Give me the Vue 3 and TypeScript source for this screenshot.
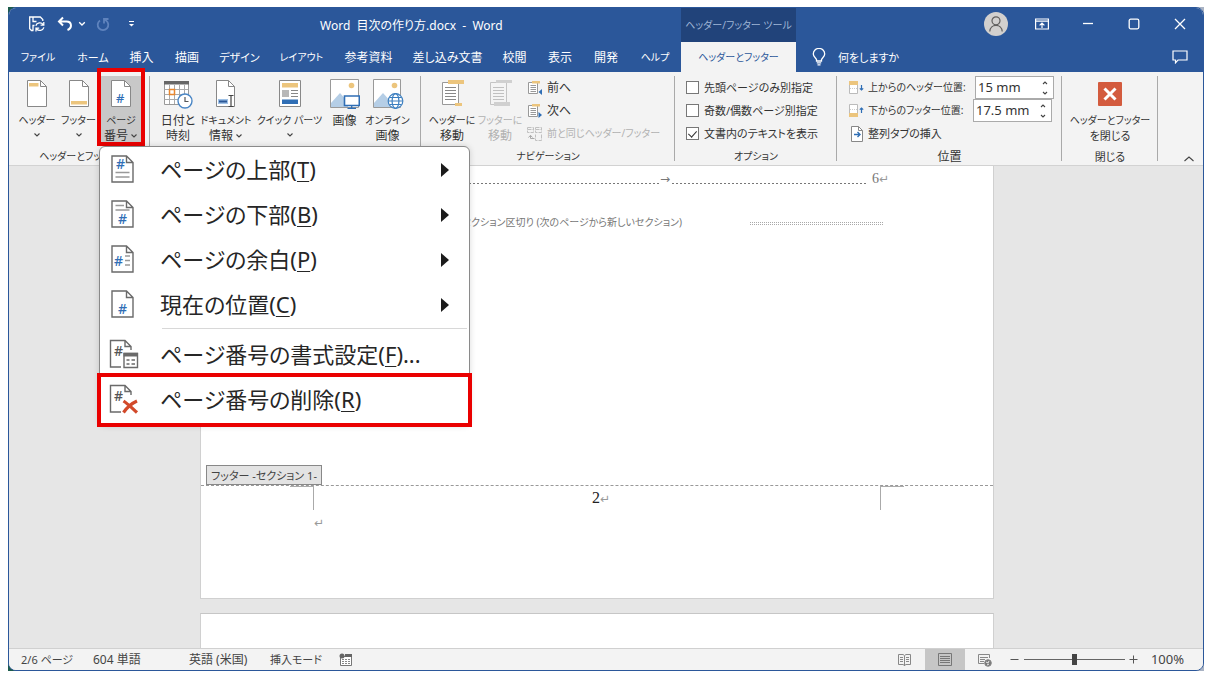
<script setup lang="ts">
import { ref } from 'vue'

interface MenuEntry {
  id: string
  label: string
  key: string
  tail: string
  submenu: boolean
}

const tabs: string[] = [
  'ファイル', 'ホーム', '挿入', '描画', 'デザイン', 'レイアウト',
  '参考資料', '差し込み文書', '校閲', '表示', '開発', 'ヘルプ',
]

const placeEntries: MenuEntry[] = [
  { id: 'top', label: 'ページの上部', key: 'T', tail: ')', submenu: true },
  { id: 'bottom', label: 'ページの下部', key: 'B', tail: ')', submenu: true },
  { id: 'margin', label: 'ページの余白', key: 'P', tail: ')', submenu: true },
  { id: 'current', label: '現在の位置', key: 'C', tail: ')', submenu: true },
]

const editEntries: MenuEntry[] = [
  { id: 'format', label: 'ページ番号の書式設定', key: 'F', tail: ')...', submenu: false },
  { id: 'remove', label: 'ページ番号の削除', key: 'R', tail: ')', submenu: false },
]

const firstPage = ref(false)
const oddEven = ref(false)
const showText = ref(true)
const headerPos = ref('15 mm')
const footerPos = ref('17.5 mm')
const zoom = ref(100)
</script>

<template>
  <div class="desktop">
    <div class="window">
      <header class="titlebar">
        <div class="title-left">
          <div class="quick">
            <button class="q-save" aria-label="上書き保存">
              <svg width="18" height="18" viewBox="0 0 18 18" fill="none" stroke="#fff" stroke-width="1.3">
                <path d="M5.5 15.5H3.5L1.7 13.7V2H12.3L14.8 4.5V6M5 2V6.5H8.5M5 15.5V10.5H6.5" />
                <path d="M7.8 10.8A4.2 4.2 0 0 1 15.2 9.6M15.8 7V10.2H12.6M15.9 12.4A4.2 4.2 0 0 1 8.6 13.8M8 16.6V13.2H11.2" />
              </svg>
            </button>
            <button class="q-undo" aria-label="元に戻す">
              <svg width="16" height="16" viewBox="0 0 16 16" fill="none" stroke="#fff" stroke-width="2">
                <path d="M6 1.5L2 5.5L6 9.5M2.5 5.5H9.5C15 5.5 15.5 12 10.5 14" />
              </svg>
            </button>
            <button class="q-more" aria-label="元に戻す一覧">
              <svg width="8" height="6" viewBox="0 0 8 6" fill="none" stroke="#fff" stroke-width="1.3"><path d="M1.2 1.2L4 4L6.8 1.2" /></svg>
            </button>
            <button class="q-redo" aria-label="繰り返し">
              <svg width="14" height="15" viewBox="0 0 14 15" fill="none" stroke="#5f83bd" stroke-width="1.8">
                <path d="M4 3.4A5.3 5.3 0 1 0 10 3.4L8.5 2.5M8 6.5V2H12.5" />
              </svg>
            </button>
            <button class="q-custom" aria-label="クイック アクセスのカスタマイズ">
              <svg width="7" height="8" viewBox="0 0 7 8"><path d="M1 1.5H6" stroke="#fff" /><path d="M1 4H6L3.5 6.5Z" fill="#fff" /></svg>
            </button>
          </div>
          <span class="title">Word&nbsp; 目次の作り方.docx&nbsp; -&nbsp; Word</span>
        </div>
        <div class="context-title">ヘッダー/フッター ツール</div>
        <div class="title-right">
          <button class="avatar" aria-label="アカウント">
            <svg width="24" height="24" viewBox="0 0 24 24">
              <circle cx="12" cy="12" r="12" fill="#d2d0ce" />
              <g fill="none" stroke="#605e5c" stroke-width="1.2"><circle cx="12" cy="8.8" r="4" /><path d="M5.8 19.5C6 11.3 18 11.3 18.2 19.5" /></g>
            </svg>
          </button>
          <button class="caption" aria-label="リボンの表示オプション">
            <svg width="14" height="12" viewBox="0 0 14 12" fill="none" stroke="#fff" stroke-width="1.2"><path d="M.6 1H13.4V11H.6ZM.6 3.2H13.4M7 10V5.2M4.6 7.4L7 5L9.4 7.4" /></svg>
          </button>
          <button class="caption" aria-label="最小化">
            <svg width="12" height="12" viewBox="0 0 12 12"><path d="M1 5.5H11" stroke="#fff" stroke-width="1.3" /></svg>
          </button>
          <button class="caption" aria-label="最大化">
            <svg width="12" height="12" viewBox="0 0 12 12"><rect x="1.2" y="1.2" width="9.6" height="9.6" rx="1.5" fill="none" stroke="#fff" stroke-width="1.3" /></svg>
          </button>
          <button class="caption" aria-label="閉じる">
            <svg width="12" height="12" viewBox="0 0 12 12"><path d="M1 1L11 11M11 1L1 11" stroke="#fff" stroke-width="1.3" /></svg>
          </button>
        </div>
      </header>

      <nav class="tabs">
        <button v-for="t in tabs" :key="t" class="tab">{{ t }}</button>
        <button class="tab active">ヘッダーとフッター</button>
        <div class="tabs-right">
          <button class="tell">
            <svg width="14" height="18" viewBox="0 0 14 18" fill="none" stroke="#fff" stroke-width="1.3">
              <path d="M4.5 13V11.5C4 9.8 1.3 8.8 1.3 5.9A5.5 5.3 0 0 1 12.7 5.9C12.7 8.8 10 9.8 9.5 11.5V13ZM4.8 14.8H9.2M5.5 16.8H8.5" />
            </svg>
            何をしますか
          </button>
          <button class="comment" aria-label="コメント">
            <svg width="16" height="14" viewBox="0 0 16 14" fill="none" stroke="#fff" stroke-width="1.2"><path d="M1 1H15V10H6L3.5 12.8V10H1Z" /></svg>
          </button>
        </div>
      </nav>

      <section class="ribbon">
        <div class="group g-hf">
          <div class="tools">
            <button class="big kana">
              <svg width="22" height="30" viewBox="0 0 22 30"><path d="M1.5 1.5H14.5L20.5 7.5V27.5H1.5Z" fill="#fff" stroke="#888" /><path d="M14.5 1.5V7.5H20.5" fill="none" stroke="#888" /><path d="M3 4H12.5V7.5H3Z" fill="#ecc57d" /></svg>
              <span>ヘッダー</span>
              <svg class="chev" width="8" height="6" viewBox="0 0 8 6"><path d="M1.5 1.5L4 4L6.5 1.5" /></svg>
            </button>
            <button class="big kana">
              <svg width="22" height="30" viewBox="0 0 22 30"><path d="M1.5 1.5H14.5L20.5 7.5V27.5H1.5Z" fill="#fff" stroke="#888" /><path d="M14.5 1.5V7.5H20.5" fill="none" stroke="#888" /><path d="M3 22H19V25.5H3Z" fill="#ecc57d" /></svg>
              <span>フッター</span>
              <svg class="chev" width="8" height="6" viewBox="0 0 8 6"><path d="M1.5 1.5L4 4L6.5 1.5" /></svg>
            </button>
            <div class="dropdown">
              <button class="big pressed" aria-haspopup="menu" aria-expanded="true">
                <svg width="22" height="30" viewBox="0 0 22 30"><path d="M1.5 1.5H14.5L20.5 7.5V27.5H1.5Z" fill="#fff" stroke="#888" /><path d="M14.5 1.5V7.5H20.5" fill="none" stroke="#888" /><text class="hash" x="6" y="24" font-size="13">#</text></svg>
                <span class="kana">ページ</span>
                <span class="with-chev">番号<svg class="chev" width="8" height="6" viewBox="0 0 8 6"><path d="M1.5 1.5L4 4L6.5 1.5" /></svg></span>
              </button>
              <div class="menu" role="menu">
                <button v-for="e in placeEntries" :key="e.id" class="entry" role="menuitem">
                  <svg width="30" height="30" viewBox="0 0 30 30" fill="none" stroke="#6a6a6a" stroke-width="1.4">
                    <path d="M3 2H17.5L24 8.5V28H3ZM17.5 2V8.5H24" />
                    <template v-if="e.id === 'top'"><text class="hash" x="7" y="15" font-size="14">#</text><path d="M6.5 18.5H20.5M6.5 23H20.5" stroke="#999" /></template>
                    <template v-else-if="e.id === 'bottom'"><path d="M6.5 6.5H15M6.5 11H20.5" stroke="#999" /><text class="hash" x="9" y="25" font-size="14">#</text></template>
                    <template v-else-if="e.id === 'margin'"><text class="hash" x="5" y="22" font-size="14">#</text><path d="M16 12H21M16 16.5H21M16 21H21" stroke="#999" /></template>
                    <text v-else class="hash" x="9" y="25" font-size="14">#</text>
                  </svg>
                  <span>{{ e.label }}(<u>{{ e.key }}</u>{{ e.tail }}</span>
                  <svg class="arrow" width="10" height="16" viewBox="0 0 10 16"><path d="M1 1L9 8L1 15Z" fill="#1b1b1b" /></svg>
                </button>
                <hr class="rule" />
                <button v-for="e in editEntries" :key="e.id" class="entry" :class="{ marked: e.id === 'remove' }" role="menuitem">
                  <svg width="30" height="30" viewBox="0 0 30 30" fill="none" stroke="#6a6a6a" stroke-width="1.4">
                    <path d="M12 28H1.5V1.5H16L22 7.5V11M16 1.5V7.5H22" />
                    <text class="hash gray" x="5" y="17" font-size="14">#</text>
                    <template v-if="e.id === 'format'">
                      <path d="M15 14.5H28.5V28.5H15Z" fill="#fff" /><path d="M14.5 13.8H29V17.5H14.5Z" fill="#6a6a6a" stroke="none" />
                      <path d="M17.5 21H20.5M22.5 21H26M17.5 25H20.5M22.5 25H26" stroke-width="1.6" />
                    </template>
                    <path v-else d="M14.5 17C19 20 23 24 28 28.5M28 17C23.5 19 18 23.5 14.5 28.5" stroke="#d2492a" stroke-width="3.2" />
                  </svg>
                  <span>{{ e.label }}(<u>{{ e.key }}</u>{{ e.tail }}</span>
                </button>
              </div>
            </div>
          </div>
          <div class="caption-row kana">ヘッダーとフッター</div>
        </div>

        <div class="group g-insert">
          <div class="tools">
            <button class="big">
              <svg width="30" height="30" viewBox="0 0 30 30">
                <path d="M1.5 2.5H25.5V25.5H1.5Z" fill="#fff" stroke="#999" /><path d="M1 2H26V5.5H1Z" fill="#666" />
                <path d="M1.5 10.5H25M1.5 15.5H25M1.5 20.5H25M6.5 6V25M11.5 6V25M16.5 6V25M21.5 6V25" stroke="#aaa" />
                <path d="M6.5 10.5H11.5V15.5H6.5Z" fill="#fff" stroke="#e8862e" stroke-width="1.5" />
                <circle cx="22" cy="22" r="7" fill="#fff" stroke="#4a86c5" stroke-width="1.4" /><path d="M22 18V22.5H25.5" fill="none" stroke="#555" stroke-width="1.2" />
              </svg>
              <span>日付と</span><span>時刻</span>
            </button>
            <button class="big">
              <svg width="22" height="30" viewBox="0 0 22 30">
                <path d="M1.5 1.5H13.5L19.5 7.5V27.5H1.5Z" fill="#fff" stroke="#888" /><path d="M13.5 1.5V7.5H19.5" fill="none" stroke="#888" />
                <path d="M3 20H13V25H3Z" fill="#9fc1e6" /><path d="M4 22.5H12" stroke="#2b5797" stroke-width="2" /><path d="M13.5 16.5H18.5M16 16.5V27.5M13.5 27.5H18.5" stroke="#444" stroke-width="1.2" />
              </svg>
              <span class="kana">ドキュメント</span>
              <span class="with-chev">情報<svg class="chev" width="8" height="6" viewBox="0 0 8 6"><path d="M1.5 1.5L4 4L6.5 1.5" /></svg></span>
            </button>
            <button class="big kana">
              <svg width="24" height="30" viewBox="0 0 24 30">
                <path d="M1.5 1.5H22.5V27.5H1.5Z" fill="#fff" stroke="#888" /><path d="M4 4H20V8.5H4Z" fill="#ecc57d" /><path d="M4 11H11V18H4Z" fill="#b8b8b8" />
                <path d="M13 11.5H20M13 14.5H20M13 17.5H20" stroke="#888" /><path d="M4 20.5H20V25H4Z" fill="#2f6eb5" />
              </svg>
              <span>クイック パーツ</span>
              <svg class="chev" width="8" height="6" viewBox="0 0 8 6"><path d="M1.5 1.5L4 4L6.5 1.5" /></svg>
            </button>
            <button class="big">
              <svg width="31" height="30" viewBox="0 0 31 30">
                <path d="M1.5 .5H29.5V28.5H1.5Z" fill="#fff" stroke="#999" /><circle cx="22.5" cy="6.5" r="2.8" fill="#ecc57d" /><path d="M2 28V24L11 14L19 23V28Z" fill="#b5cee6" />
                <path d="M15.5 17H30.3V26.5H15.5Z" fill="#fff" stroke="#2f6eb5" stroke-width="1.6" /><path d="M22.7 27V29.3M18.5 29.3H27" stroke="#2f6eb5" stroke-width="1.3" />
              </svg>
              <span>画像</span>
            </button>
            <button class="big">
              <svg width="32" height="30" viewBox="0 0 32 30">
                <path d="M1.5 .5H28.5V28.5H1.5Z" fill="#fff" stroke="#999" /><circle cx="22.5" cy="6.5" r="2.8" fill="#ecc57d" /><path d="M2 28V24L11 14L19 23V28Z" fill="#b5cee6" />
                <g fill="#fff" stroke="#3c7fc0" stroke-width="1.2"><circle cx="23.5" cy="22" r="7.3" /><ellipse cx="23.5" cy="22" rx="3.4" ry="7.3" fill="none" /><path d="M16.5 22H30.5M17.5 18.5H29.5M17.5 25.5H29.5" /></g>
              </svg>
              <span class="kana">オンライン</span><span>画像</span>
            </button>
          </div>
        </div>

        <div class="group g-nav">
          <div class="tools">
            <button class="big">
              <svg width="24" height="30" viewBox="0 0 24 30"><path d="M2.5 3.5H18.5V25.5H2.5Z" fill="#fff" stroke="#999" /><path d="M8 1H24V5H8Z" fill="#ecc57d" /><path d="M5 8.5H16M5 11.5H16M5 14.5H16M5 17.5H16M5 20.5H16" stroke="#888" /><path d="M15 24H22V27H15Z" fill="#ecc57d" /></svg>
              <span class="kana">ヘッダーに</span><span>移動</span>
            </button>
            <button class="big" disabled>
              <svg width="24" height="30" viewBox="0 0 24 30"><path d="M2.5 3.5H18.5V25.5H2.5Z" fill="#f4f4f4" stroke="#c4c4c4" /><path d="M8 1H24V4H8Z" fill="#d0d0d0" /><path d="M5 8.5H16M5 11.5H16M5 14.5H16M5 17.5H16M5 20.5H16" stroke="#c0c0c0" /><path d="M6 23H22V27H6Z" fill="#d0d0d0" /></svg>
              <span class="kana">フッターに</span><span>移動</span>
            </button>
            <div class="rows">
              <button class="row">
                <svg width="16" height="16" viewBox="0 0 16 16"><path d="M1.5 2.5H10.5V13.5H1.5Z" fill="#fff" stroke="#999" /><path d="M5 1H13V3.5H5Z" fill="#ecc57d" /><path d="M3.5 5.5H9M3.5 7.5H9M3.5 9.5H9M3.5 11.5H9" stroke="#999" /><path d="M15 9V15L11.5 12Z" fill="#2f6eb5" /></svg>
                前へ
              </button>
              <button class="row">
                <svg width="16" height="16" viewBox="0 0 16 16"><path d="M1.5 2.5H10.5V13.5H1.5Z" fill="#fff" stroke="#999" /><path d="M5 1H13V3.5H5Z" fill="#ecc57d" /><path d="M3.5 5.5H9M3.5 7.5H9M3.5 9.5H9M3.5 11.5H9" stroke="#999" /><path d="M11.5 9V15L15 12Z" fill="#2f6eb5" /></svg>
                次へ
              </button>
              <button class="row" disabled>
                <svg width="16" height="16" viewBox="0 0 16 16" fill="none" stroke="#c0c0c0"><path d="M.5 1.5H6.5V6.5H.5ZM8.5 1.5H14.5V6.5H8.5ZM14.5 8.5V14.5H8.5V8.5M.5 3.5H6.5M8.5 3.5H14.5" stroke-dasharray="4 1" /><path d="M7.5 12.5H3.5V9.5M1.5 11.5L3.5 9.3L5.5 11.5" stroke="#aaa" /></svg>
                <span class="kana">前と同じヘッダー/フッター</span>
              </button>
            </div>
          </div>
          <div class="caption-row kana">ナビゲーション</div>
        </div>

        <div class="group g-option">
          <div class="tools">
            <div class="rows">
              <label class="row"><input v-model="firstPage" type="checkbox" />先頭ページのみ別指定</label>
              <label class="row"><input v-model="oddEven" type="checkbox" />奇数/偶数ページ別指定</label>
              <label class="row"><input v-model="showText" type="checkbox" />文書内のテキストを表示</label>
            </div>
          </div>
          <div class="caption-row kana">オプション</div>
        </div>

        <div class="group g-pos">
          <div class="tools">
            <div class="rows">
              <div class="row">
                <svg width="15" height="16" viewBox="0 0 15 16"><path d="M.5 1.5H8.5V13.5H.5Z" fill="#fff" stroke="#bbb" /><path d="M1 8.5H8" stroke="#ccc" stroke-dasharray="1 1" /><path d="M0 1H9V5H0Z" fill="#ecc57d" /><path d="M12.5 5V10M10.8 8.3L12.5 10L14.2 8.3" fill="none" stroke="#2f6eb5" stroke-width="1.2" /></svg>
                <label class="pos-label" for="header-pos">上からのヘッダー位置:</label>
                <span class="spin"><input id="header-pos" v-model="headerPos" type="text" />
                  <span class="spinners">
                    <button aria-label="ヘッダー位置を増やす"><svg class="chev" width="8" height="6" viewBox="0 0 8 6"><path d="M2 4L4 2L6 4" /></svg></button>
                    <button aria-label="ヘッダー位置を減らす"><svg class="chev" width="8" height="6" viewBox="0 0 8 6"><path d="M2 2L4 4L6 2" /></svg></button>
                  </span>
                </span>
              </div>
              <div class="row">
                <svg width="15" height="16" viewBox="0 0 15 16"><path d="M.5 1.5H8.5V13.5H.5Z" fill="#fff" stroke="#bbb" /><path d="M1 6.5H8" stroke="#ccc" stroke-dasharray="1 1" /><path d="M0 10H9V14H0Z" fill="#ecc57d" /><path d="M12.5 10V5M10.8 6.7L12.5 5L14.2 6.7" fill="none" stroke="#2f6eb5" stroke-width="1.2" /></svg>
                <label class="pos-label low" for="footer-pos">下からのフッター位置:</label>
                <span class="spin"><input id="footer-pos" v-model="footerPos" type="text" />
                  <span class="spinners">
                    <button aria-label="フッター位置を増やす"><svg class="chev" width="8" height="6" viewBox="0 0 8 6"><path d="M2 4L4 2L6 4" /></svg></button>
                    <button aria-label="フッター位置を減らす"><svg class="chev" width="8" height="6" viewBox="0 0 8 6"><path d="M2 2L4 4L6 2" /></svg></button>
                  </span>
                </span>
              </div>
              <button class="row">
                <svg width="15" height="16" viewBox="0 0 15 16"><path d="M2.5 .5H9.5L13.5 4.5V15.5H2.5Z" fill="#fff" stroke="#888" /><path d="M9.5 .5V4.5H13.5" fill="none" stroke="#888" /><path d="M5 8.5H11M8.5 6L11 8.5L8.5 11" fill="none" stroke="#2f6eb5" stroke-width="1.4" /></svg>
                整列タブの挿入
              </button>
            </div>
          </div>
          <div class="caption-row">位置</div>
        </div>

        <div class="group g-close">
          <div class="tools">
            <button class="big">
              <svg width="24" height="30" viewBox="0 0 24 30"><rect y="3" width="24" height="24" rx="1" fill="#d35b3e" /><path d="M6.5 9.5L17.5 20.5M17.5 9.5L6.5 20.5" stroke="#fff" stroke-width="3" /></svg>
              <span class="kana">ヘッダーとフッター</span><span class="mixed">を閉じる</span>
            </button>
          </div>
          <div class="caption-row mixed">閉じる</div>
        </div>

        <div class="collapse">
          <button aria-label="リボンを折りたたむ"><svg class="chev" width="12" height="8" viewBox="0 0 12 8"><path d="M1.5 6L6 2L10.5 6" /></svg></button>
        </div>
      </section>

      <main class="canvas">
        <article class="page">
          <div class="page-body">
            <p class="toc"><span class="dots"></span><span class="tab-mark">→</span><span class="dots"></span><span class="num">6<i>↵</i></span></p>
            <p class="break"><span>セクション区切り (次のページから新しいセクション)</span><span class="double"></span></p>
          </div>
          <div class="footer-tag"><span>フッター -セクション 1-</span></div>
          <div class="page-footer">
            <span class="crop crop-left"></span>
            <div class="footer-text">
              <p class="footer-num">2<i>↵</i></p>
              <p><i>↵</i></p>
            </div>
            <span class="crop crop-right"></span>
          </div>
        </article>
        <article class="page next"></article>
      </main>

      <footer class="status">
        <button class="s-page">2/6 ページ</button>
        <button class="s-words">604 単語</button>
        <button class="s-lang">英語 (米国)</button>
        <button class="s-mode">挿入モード</button>
        <button aria-label="マクロの記録">
          <svg width="13" height="13" viewBox="0 0 13 13"><path d="M1.5 3.5H12.5V12.5H1.5Z" fill="#fff" stroke="#777" /><path d="M6 1H13V4H6Z" fill="#666" /><circle cx="3" cy="3" r="2.5" fill="#666" /><path d="M3 6.5H11M3 8.5H11M3 10.5H11" stroke="#888" stroke-dasharray="2 1" /></svg>
        </button>
        <div class="views">
          <button aria-label="閲覧モード">
            <svg width="15" height="14" viewBox="0 0 15 14" fill="none" stroke="#888"><path d="M1.5 1.5H6L7.5 2.5L9 1.5H13.5V11.5H9L7.5 12.5L6 11.5H1.5ZM7.5 3V13M3 4.5H6M3 6.5H6M3 8.5H6M9 4.5H12M9 6.5H12M9 8.5H12" /></svg>
          </button>
          <button class="on" aria-label="印刷レイアウト">
            <svg width="14" height="14" viewBox="0 0 14 14" fill="none" stroke="#777"><path d="M.5 .5H13.5V12.5H.5ZM2 3.5H12M2 5.5H12M2 7.5H12M2 9.5H12" /></svg>
          </button>
          <button aria-label="Web レイアウト">
            <svg width="15" height="14" viewBox="0 0 15 14" fill="none" stroke="#888"><path d="M7 10.5H1.5V1.5H12.5V5M3 4.5H11M3 6.5H8M3 8.5H7" /><circle cx="11" cy="10" r="3.3" fill="#777" /><path d="M9 9L11 10L12 8M10 12L12 11" stroke="#eee" /></svg>
          </button>
        </div>
        <button class="zoom-btn" aria-label="縮小"><svg width="9" height="9" viewBox="0 0 9 9"><path d="M.5 4.5H8.5" stroke="#555" /></svg></button>
        <input v-model="zoom" class="slider" type="range" min="0" max="200" aria-label="ズーム" />
        <button class="zoom-btn" aria-label="拡大"><svg width="9" height="9" viewBox="0 0 9 9"><path d="M.5 4.5H8.5M4.5 .5V8.5" stroke="#555" /></svg></button>
        <button class="percent">{{ zoom }}%</button>
      </footer>
    </div>
  </div>
</template>

<style>
html,
body {
  background: #fff;
}
</style>

<style scoped>
* {
  box-sizing: border-box;
}
button {
  padding: 0;
  border: 0;
  background: none;
  color: inherit;
  font: inherit;
  white-space: nowrap;
}
p {
  margin: 0;
}
i {
  font-family: "DejaVu Sans", sans-serif;
  font-style: normal;
  font-size: 12px;
  color: #999;
}
.desktop {
  height: 100vh;
  padding: 7px 6px 7px 8px;
  font-family: "Noto Sans", "Noto Sans CJK JP", sans-serif;
  font-feature-settings: "palt";
  font-size: 12px;
  line-height: 15px;
  color: #333;
  background: linear-gradient(90deg, #1d5c4c, #a9b3c4) content-box, #fff;
}
.window {
  height: 100%;
  display: flex;
  flex-direction: column;
  border: 1px solid #2b579a;
  border-radius: 8px;
  background: #e6e6e6;
}
.kana {
  font-size: 10px;
}
.mixed {
  font-size: 11px;
}

.titlebar {
  display: grid;
  grid-template-columns: 672px 115px 1fr;
  height: 34px;
  flex: none;
  color: #fff;
  background: #2b579a;
  border-radius: 7px 7px 0 0;
}
.title-left {
  display: flex;
  align-items: center;
}
.quick {
  display: flex;
  align-items: center;
  width: 311px;
  padding: 0 0 2px 19px;
}
.quick button {
  display: flex;
}
.q-undo {
  margin-left: 11px;
}
.q-more {
  margin-left: 5px;
}
.q-redo {
  margin-left: 10px;
}
.q-custom {
  margin-left: 18px;
}
.title {
  white-space: pre;
}
.context-title {
  display: flex;
  align-items: center;
  justify-content: center;
  font-size: 10px;
  white-space: nowrap;
  color: #9fb5d6;
  background: #21437a;
}
.title-right {
  display: flex;
  justify-content: flex-end;
  align-items: center;
  padding-bottom: 2px;
}
.avatar {
  display: flex;
  margin-right: 11px;
}
.caption {
  display: flex;
  width: 46px;
  height: 32px;
  align-items: center;
  justify-content: center;
}

.tabs {
  display: grid;
  grid-template-columns: 58px 52px 45px 46px 59px 65px 69px 89px 45px 46px 46px 52px 115px 1fr;
  height: 30px;
  flex: none;
  color: #fff;
  background: #2b579a;
}
.tab.active {
  font-size: 10px;
  color: #2b579a;
  background: #f3f3f3;
}
.tab:nth-child(2),
.tab:nth-child(5) {
  font-size: 11px;
}
.tab:nth-child(1),
.tab:nth-child(6),
.tab:nth-child(12) {
  font-size: 10px;
}
.tabs-right {
  display: flex;
  align-items: center;
  justify-content: space-between;
  padding: 0 15px 0 16px;
}
.tell {
  display: flex;
  align-items: center;
  gap: 12px;
  font-size: 11px;
}
.comment {
  display: flex;
}

.ribbon {
  display: flex;
  flex: none;
  height: 94px;
  background: #f3f3f3;
  border-bottom: 1px solid #d2d2d2;
}
.group {
  position: relative;
  display: flex;
  flex: none;
  flex-direction: column;
  padding-top: 4px;
}
.group::after {
  content: "";
  position: absolute;
  right: 0;
  top: 4px;
  bottom: 4px;
  width: 1px;
  background: #a9a9a9;
}
.tools {
  display: grid;
  height: 70px;
}
.caption-row {
  padding-top: 2px;
  line-height: 17px;
  text-align: center;
  white-space: nowrap;
}
.g-hf {
  width: 141px;
}
.g-hf .tools {
  grid-template-columns: 42px 41px 44px;
  padding-left: 7px;
}
.g-insert {
  width: 271px;
}
.g-insert .tools {
  grid-template-columns: 40px 56px 71px 39px 47px;
  padding-left: 8px;
}
.g-nav {
  width: 254px;
}
.g-nav .tools {
  grid-template-columns: 48px 48px 1fr;
  padding-left: 7px;
}
.g-nav .rows {
  padding-left: 3px;
}
.g-option {
  width: 162px;
}
.g-option .tools {
  padding-left: 11px;
  font-size: 11px;
}
.g-pos {
  width: 225px;
}
.g-pos .tools {
  padding-left: 12px;
  font-size: 11px;
}
.g-close {
  width: 96px;
}
.big {
  display: flex;
  flex-direction: column;
  align-items: center;
  padding-top: 3px;
  min-width: 0;
}
.big > svg:first-child {
  margin-bottom: 4px;
}
.big > svg.chev {
  margin-top: 4px;
}
button:disabled {
  color: #b1b1b1;
}
.chev path {
  fill: none;
  stroke: #444;
  stroke-width: 1.1;
}
.with-chev {
  display: flex;
  align-items: center;
  gap: 2px;
}
.hash {
  font-family: "Noto Sans", sans-serif;
  font-weight: 500;
  fill: #2f6eb5;
  stroke: none;
}
.hash.gray {
  fill: #555;
}
.rows {
  display: flex;
  flex-direction: column;
}
.row {
  display: flex;
  align-items: center;
  gap: 4px;
  height: 23px;
  white-space: nowrap;
}
.pos-label {
  width: 103px;
  font-size: 10px;
}
.pos-label.low {
  width: 101px;
}
input[type="checkbox"] {
  appearance: none;
  display: flex;
  align-items: center;
  justify-content: center;
  width: 13px;
  height: 13px;
  margin: 0 1px 0 0;
  border: 1px solid #777;
  background: #fff;
}
input[type="checkbox"]:checked::after {
  content: "";
  width: 4px;
  height: 7px;
  margin-bottom: 2px;
  border: solid #333;
  border-width: 0 1px 1px 0;
  rotate: 42deg;
}
.spin {
  display: flex;
  width: 79px;
  height: 23px;
  border: 1px solid #aaa;
  background: #fff;
}
.spin input {
  flex: 1;
  min-width: 0;
  padding: 0 0 0 2px;
  border: 0;
  outline: 0;
  background: none;
  font: inherit;
  font-size: 13px;
  color: #333;
}
.spinners {
  display: flex;
  flex-direction: column;
  justify-content: center;
  gap: 4px;
  width: 16px;
}
.spinners button {
  display: flex;
  justify-content: center;
}
.collapse {
  flex: 1;
  display: flex;
  align-items: flex-end;
  justify-content: flex-end;
  padding: 0 8px 2px 0;
}
.collapse button {
  display: flex;
}

.dropdown {
  position: relative;
  z-index: 5;
}
.pressed {
  width: 100%;
  height: 100%;
  background: #c8c8c8;
}
.pressed::after {
  content: "";
  position: absolute;
  inset: -8px -2px 0;
  border: 4px solid #ea0000;
}
.menu {
  position: absolute;
  top: 100%;
  left: 0;
  width: 371px;
  padding: 1px 0 2px;
  border: 1px solid #8a8a8a;
  border-radius: 6px;
  background: #fff;
  box-shadow: 0 0 6px rgba(0, 0, 0, 0.15);
}
.entry {
  position: relative;
  display: flex;
  align-items: center;
  width: 100%;
  height: 45px;
  padding: 0 19px 0 9px;
  font-size: 22px;
  line-height: 30px;
  text-align: left;
  color: #262626;
}
.entry > span {
  flex: 1;
  margin: 0 0 3px 21px;
}
.entry u {
  text-decoration-thickness: 1px;
  text-underline-offset: 3px;
}
.entry > svg:first-child {
  margin-bottom: 4px;
}
.entry > .arrow {
  margin-bottom: 2px;
}
.rule {
  height: 1px;
  margin: 0 2px 4px 62px;
  border: 0;
  background: #d8d8d8;
}
.marked::after {
  content: "";
  position: absolute;
  inset: -5px -3px -4px;
  border: 4px solid #ea0000;
}

.canvas {
  flex: 1;
  min-height: 0;
  overflow: hidden;
  padding-right: 18px;
}
.page {
  display: flex;
  flex-direction: column;
  width: 794px;
  max-width: 100%;
  margin: 0 auto;
  border: 1px solid #d0d0d0;
  border-top: 0;
  background: #fff;
}
.page.next {
  height: 100px;
  margin-top: 14px;
  border-top: 1px solid #c6c6c6;
}
.page-body {
  height: 299px;
  padding: 4px 104px 0 112px;
  color: #777;
}
.toc {
  display: flex;
  align-items: center;
  height: 18px;
  font-family: "Liberation Serif", serif;
  font-size: 14px;
}
.dots {
  flex: 1;
  height: 1px;
  margin-top: 8px;
  background: repeating-linear-gradient(90deg, #777 0 2px, transparent 2px 4px);
}
.dots:first-child {
  flex: 0 0 347px;
}
.tab-mark {
  width: 12px;
  font-family: "DejaVu Sans", sans-serif;
  font-size: 12px;
}
.num {
  margin-left: 4px;
}
.break {
  display: flex;
  justify-content: flex-end;
  align-items: center;
  height: 18px;
  margin-top: 25px;
  padding-right: 6px;
  font-size: 10px;
  white-space: nowrap;
}
.double {
  width: 133px;
  height: 3px;
  margin: 3px 0 0 68px;
  border: dotted #aaa;
  border-width: 1px 0;
}
.footer-tag {
  padding-left: 5px;
}
.footer-tag span {
  display: flex;
  align-items: center;
  justify-content: center;
  width: 116px;
  height: 20px;
  border: 1px solid #888;
  font-size: 11px;
  white-space: nowrap;
  color: #444;
  background: #e3e3e3;
}
.page-footer {
  display: flex;
  justify-content: space-between;
  height: 113px;
  padding: 0 89px;
  border-top: 1px dashed #999;
}
.crop {
  width: 24px;
  height: 24px;
  border-top: 1px solid #aaa;
}
.crop-left {
  border-right: 1px solid #aaa;
}
.crop-right {
  border-left: 1px solid #aaa;
}
.footer-text {
  flex: 1;
  line-height: 24px;
}
.footer-num {
  padding-left: 8px;
  text-align: center;
  font-family: "Liberation Serif", serif;
  font-size: 16px;
  color: #222;
}

.status {
  display: flex;
  align-items: center;
  flex: none;
  height: 22px;
  padding: 0 19px 0 12px;
  border-top: 1px solid #d0d0d0;
  border-radius: 0 0 7px 7px;
  font-size: 11px;
  color: #444;
  background: #f3f3f3;
}
.status svg {
  display: block;
}
.status > button {
  text-align: left;
}
.s-page {
  width: 72px;
}
.status > .s-words {
  width: 96px;
  font-size: 12px;
}
.status > .s-lang {
  width: 81px;
  font-size: 12px;
}
.s-mode {
  width: 69px;
}
.views {
  display: flex;
  align-self: stretch;
  margin-left: auto;
}
.views button {
  display: flex;
  align-items: center;
  justify-content: center;
  width: 40px;
}
.views .on {
  background: #c6c6c6;
}
.views + .zoom-btn {
  margin-left: 5px;
}
.slider {
  appearance: none;
  width: 101px;
  height: 12px;
  margin: 0 4px 0 5px;
  background: linear-gradient(#666, #666) center / 100% 1px no-repeat;
}
.slider::-webkit-slider-thumb {
  appearance: none;
  width: 5px;
  height: 11px;
  background: #444;
}
.status > .percent {
  margin-left: 13px;
  font-size: 13px;
}
</style>
